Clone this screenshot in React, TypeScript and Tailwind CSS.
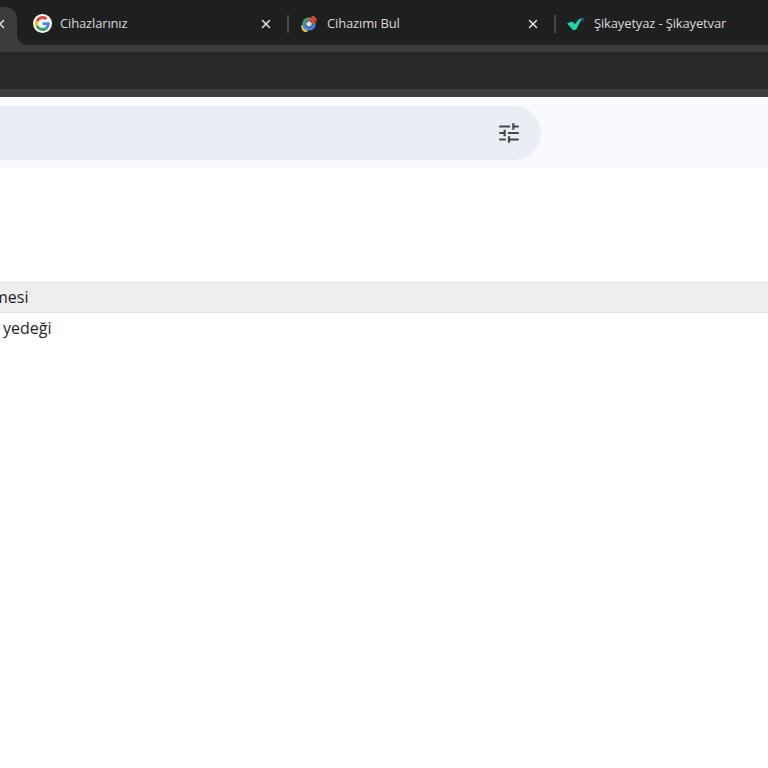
import { X } from 'lucide-react';

function GoogleIcon() {
  return (
    <span className="flex h-[19px] w-[19px] shrink-0 items-center justify-center rounded-full bg-white">
      <svg viewBox="0 0 48 48" className="h-[15px] w-[15px]">
        <path fill="#EA4335" d="M24 9.5c3.5 0 6.7 1.3 9.1 3.5l6.8-6.8C35.8 2.4 30.2 0 24 0 14.6 0 6.5 5.4 2.6 13.2l7.9 6.2C12.4 13.7 17.7 9.5 24 9.5z" />
        <path fill="#4285F4" d="M47 24.5c0-1.6-.1-3.100-.4-4.500H24v9h12.900c-.6 3-2.200 5.500-4.700 7.200l7.600 5.900C44.300 37.500 47 31.600 47 24.500z" />
        <path fill="#FBBC05" d="M10.500 28.600c-.5-1.400-.8-3-.8-4.600s.3-3.200.8-4.600l-7.900-6.200C.9 16.500 0 20.100 0 24s.9 7.500 2.600 10.800l7.900-6.200z" />
        <path fill="#34A853" d="M24 48c6.200 0 11.900-2 15.800-5.900l-7.600-5.900c-2.100 1.400-4.900 2.300-8.200 2.300-6.300 0-11.600-4.200-13.500-9.900l-7.900 6.200C6.500 42.600 14.600 48 24 48z" />
      </svg>
    </span>
  );
}

function FindDeviceIcon() {
  return (
    <svg viewBox="0 0 18 18" className="h-[18px] w-[18px] shrink-0">
      <path d="M1.500 10 C0.500 14 3 17.500 7 17 L8.500 14.500 C6 14.500 3.800 13 3.200 10 Z" fill="#f4c20d" />
      <path d="M12 0.500 C14.500 1 17 3.500 17 6.500 L14.800 5.800 C14 4 12.800 3 11 2.500 Z" fill="#ea4335" />
      <circle cx="9" cy="9" r="5" fill="none" stroke="#4285f4" strokeWidth="3.200" />
      <path d="M4 9 A5 5 0 0 1 9 4" fill="none" stroke="#34a853" strokeWidth="3.200" />
      <path d="M9 4 A5 5 0 0 1 14 9" fill="none" stroke="#ea4335" strokeWidth="3.200" />
      <circle cx="9" cy="9" r="2.800" fill="#d5dbe3" />
    </svg>
  );
}

function SikayetIcon() {
  return (
    <svg viewBox="0 0 18 14" className="h-[14px] w-[18px] shrink-0">
      <path d="M0 6.500 L5 4.500 L8 7 L12 2 L15 1 L9.500 12 Q7.500 14 5.500 12.500 Z" fill="#1bd6ab" />
      <path d="M13.500 2 L18 0.500 L15.200 5 Z" fill="#3f51b5" />
    </svg>
  );
}

function TuneIcon() {
  return (
    <svg viewBox="0 0 24 24" className="h-[26px] w-[26px]" fill="#444746">
      <path d="M3 17v2h6v-2H3zM3 5v2h10V5H3zm10 16v-2h8v-2h-8v-2h-2v6h2zM7 9v2H3v2h4v2h2V9H7zm14 4v-2H11v2h10zm-6-4h2V7h4V5h-4V3h-2v6z" />
    </svg>
  );
}

function Tab({ icon, title, close = true }: { icon: React.ReactNode; title: string; close?: boolean }) {
  return (
    <div className="flex h-[38px] w-[267px] shrink-0 items-center pb-[5px]">
      <div className="flex w-[26px] shrink-0 justify-center">{icon}</div>
      <span className="ml-[5px] flex-1 text-[13px] tracking-[-0.15px] whitespace-nowrap text-[#d8d9d9]">{title}</span>
      {close && (
        <>
          <X className="mr-[14px] h-[14px] w-[14px] text-[#e3e3e3]" strokeWidth={2.5} />
          <span className="mr-[7px] h-[18px] w-[2px] bg-[#474747]" />
        </>
      )}
    </div>
  );
}

export default function App() {
  return (
    <div className="flex h-[768px] w-[768px] flex-col overflow-hidden bg-white font-['Open_Sans',sans-serif]">
      {/* tab strip */}
      <div className="flex h-[45px] items-end bg-[#1e1f1f]">
        <div className="flex h-[38px] w-[17px] shrink-0 items-center overflow-hidden rounded-tr-xl bg-[#3c3c3c] pb-[5px]">
          <X className="ml-[-7px] h-[14px] w-[14px] shrink-0 text-[#e3e3e3]" strokeWidth={2.5} />
        </div>
        <div className="h-[38px] flex-1 bg-[#3c3c3c]">
          <div className="flex h-[38px] rounded-bl-[10px] bg-[#1e1f1f] pl-[12px]">
            <Tab icon={<GoogleIcon />} title="Cihazlarınız" />
            <Tab icon={<FindDeviceIcon />} title="Cihazımı Bul" />
            <Tab icon={<SikayetIcon />} title="Şikayetyaz - Şikayetvar" close={false} />
          </div>
        </div>
      </div>
      <div className="h-[7px] bg-[#3c3c3c]" />
      {/* toolbar */}
      <div className="h-[37px] bg-[#282828]" />
      <div className="h-[8px] bg-[#3e3e3e]" />
      <div className="h-px bg-white" />
      {/* search header */}
      <div className="flex h-[70px] items-start bg-[#f8fafd] pt-[8px]">
        <div className="flex h-[54px] w-[541px] items-center justify-end rounded-r-[27px] bg-[#e9eef6] pr-[19px]">
          <TuneIcon />
        </div>
      </div>
      {/* file list */}
      <div className="mt-[113px] flex h-[32px] items-center border-b border-[#e3e3e3] bg-[#eeeeee] text-[16px] text-[#1f1f1f]">
        <span className="ml-[-7px]">mesi</span>
      </div>
      <div className="flex h-[32px] items-center pb-[2px] pl-[3px] text-[16px] text-[#1f1f1f]">yedeği</div>
    </div>
  );
}
